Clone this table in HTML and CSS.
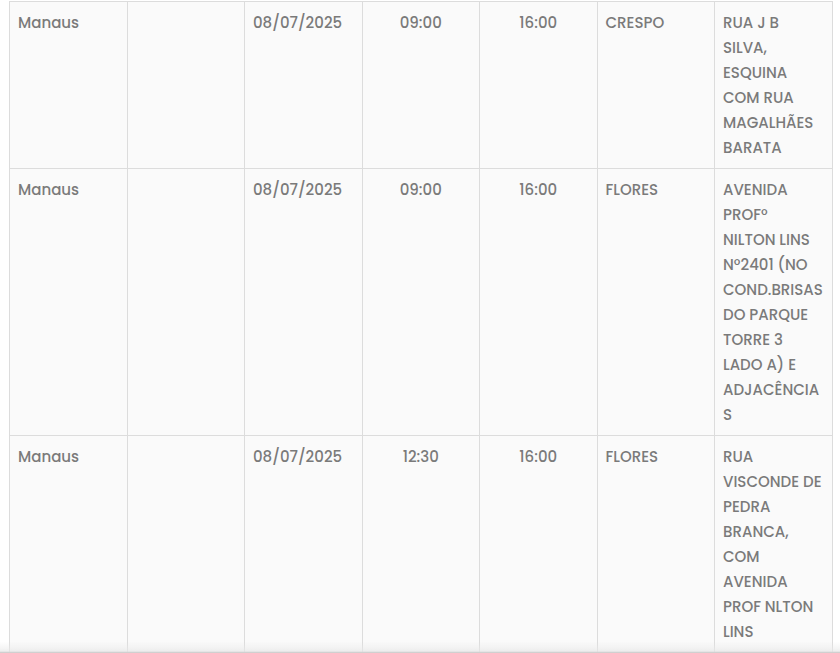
FILE: index.html
```html
<!DOCTYPE html>
<html lang="pt-BR">
<head>
<meta charset="utf-8">
<title>Programação</title>
<link rel="stylesheet" href="styles.css">
</head>
<body>
<div class="wrap">
<table class="schedule">
  <colgroup>
    <col class="c"><col class="c"><col class="c"><col class="c"><col class="c"><col class="c"><col class="c">
  </colgroup>
  <tbody>
    <tr>
      <td>Manaus</td>
      <td></td>
      <td>08/07/2025</td>
      <td class="center">09:00</td>
      <td class="center">16:00</td>
      <td>CRESPO</td>
      <td>RUA J B<br>SILVA,<br>ESQUINA<br>COM RUA<br>MAGALHÃES<br>BARATA</td>
    </tr>
    <tr>
      <td>Manaus</td>
      <td></td>
      <td>08/07/2025</td>
      <td class="center">09:00</td>
      <td class="center">16:00</td>
      <td>FLORES</td>
      <td>AVENIDA<br>PROFº<br>NILTON LINS<br>Nº2401 (NO<br>COND.BRISAS<br>DO PARQUE<br>TORRE 3<br>LADO A) E<br>ADJACÊNCIA<br>S</td>
    </tr>
    <tr>
      <td>Manaus</td>
      <td></td>
      <td>08/07/2025</td>
      <td class="center">12:30</td>
      <td class="center">16:00</td>
      <td>FLORES</td>
      <td>RUA<br>VISCONDE DE<br>PEDRA<br>BRANCA,<br>COM<br>AVENIDA<br>PROF NLTON<br>LINS<br>&nbsp;</td>
    </tr>
  </tbody>
</table>
</div>
<div class="fade"></div>
</body>
</html>
```

FILE: styles.css
```css
html, body {
  margin: 0;
  padding: 0;
  background: #ffffff;
}
body {
  font-family: "Poppins", "Inter", "Noto Sans", sans-serif;
  overflow: hidden;
  height: 653px;
}
.wrap {
  padding: 1px 8px 0 9px;
}
.schedule {
  width: 823px;
  border-collapse: collapse;
  table-layout: fixed;
  background: #fafafa;
  color: #7a7a7a;
  font-size: 15px;
  font-weight: 500;
  line-height: 25px;
}
.schedule .c {
  width: 117.5px;
}
.schedule td {
  border: 1px solid #dcdcdc;
  padding: 8px;
  vertical-align: top;
  text-align: left;
  white-space: nowrap;
}
.schedule td.center {
  text-align: center;
}
.fade {
  position: fixed;
  left: 0;
  right: 0;
  bottom: 0;
  height: 11px;
  background: linear-gradient(to bottom, rgba(235, 235, 235, 0) 0%, rgba(232, 232, 232, 0.7) 85%, #d0d0d0 90%, #d0d0d0 100%);
  pointer-events: none;
}
```
